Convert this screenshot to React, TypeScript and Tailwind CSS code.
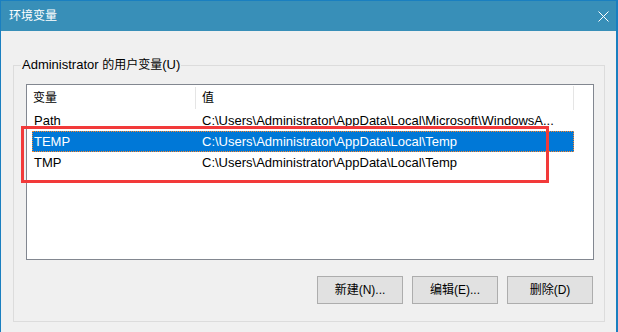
const ROWS = [
  { name: "Path", value: "C:\\Users\\Administrator\\AppData\\Local\\Microsoft\\WindowsA..." },
  { name: "TEMP", value: "C:\\Users\\Administrator\\AppData\\Local\\Temp", selected: true },
  { name: "TMP", value: "C:\\Users\\Administrator\\AppData\\Local\\Temp" },
];

const BUTTONS = ["新建(N)...", "编辑(E)...", "删除(D)"];

export default function App() {
  return (
    <div className="relative w-[618px] h-[332px] flex flex-col overflow-hidden bg-[#f0f0f0] border-t border-l border-r-2 border-[#1a7fc0] text-[13px] text-black font-['Liberation_Sans','Noto_Sans_CJK_SC',sans-serif]">
      {/* Title bar */}
      <div className="h-[30px] shrink-0 flex items-center justify-between bg-[#388fb8] pl-[8px] pr-[7px] text-white text-[12px]">
        <span>环境变量</span>
        <svg width="11" height="11" viewBox="0 0 11 11" aria-hidden="true">
          <path d="M0.5 0.5 L10.5 10.5 M10.5 0.5 L0.5 10.5" stroke="#fff" strokeWidth="1" />
        </svg>
      </div>

      {/* Body */}
      <div className="flex-1 pt-[26px] pl-[12px] pr-[11px]">
        <fieldset className="h-[265px] border border-[#dcdcdc]">
          <legend className="ml-[7px] px-[1px] leading-[16px]">
            Administrator <span className="text-[12px]">的用户变量</span>(U)
          </legend>

          <div className="flex flex-col pt-[11px] pl-[12px] pr-[10px]">
            {/* List view */}
            <div className="h-[176px] border border-[#828790] bg-white">
              <div className="h-[25px] flex items-center">
                <div className="w-[168px] pl-[6px] text-[12px]">变量</div>
                <div className="w-px h-[22px] bg-[#e5e5e5]" />
                <div className="w-[377px] pl-[6px] text-[12px]">值</div>
                <div className="w-px h-[24px] bg-[#e5e5e5]" />
              </div>

              {ROWS.map((row) => (
                <div
                  key={row.name}
                  className={[
                    "ml-[5px] w-[542px] h-[21px] flex items-center",
                    row.selected
                      ? "bg-[#0078d7] text-white outline-1 outline-dotted -outline-offset-1 outline-[#ff8728]"
                      : "",
                  ].join(" ")}
                >
                  <div className="w-[164px] pl-[2px]">{row.name}</div>
                  <div className="flex-1 pl-[6px] whitespace-nowrap">{row.value}</div>
                </div>
              ))}
            </div>

            {/* Buttons */}
            <div className="mt-[16px] flex justify-end gap-[9px] pr-[1px]">
              {BUTTONS.map((label) => (
                <button
                  key={label}
                  type="button"
                  className="w-[86px] h-[28px] border border-[#adadad] bg-[#e1e1e1] text-[12px] flex items-center justify-center"
                >
                  {label}
                </button>
              ))}
            </div>
          </div>
        </fieldset>
      </div>

      {/* Annotation */}
      <div className="absolute left-[20px] top-[125px] w-[528px] h-[57px] border-[3px] border-[#f23a3a]" />
    </div>
  );
}
